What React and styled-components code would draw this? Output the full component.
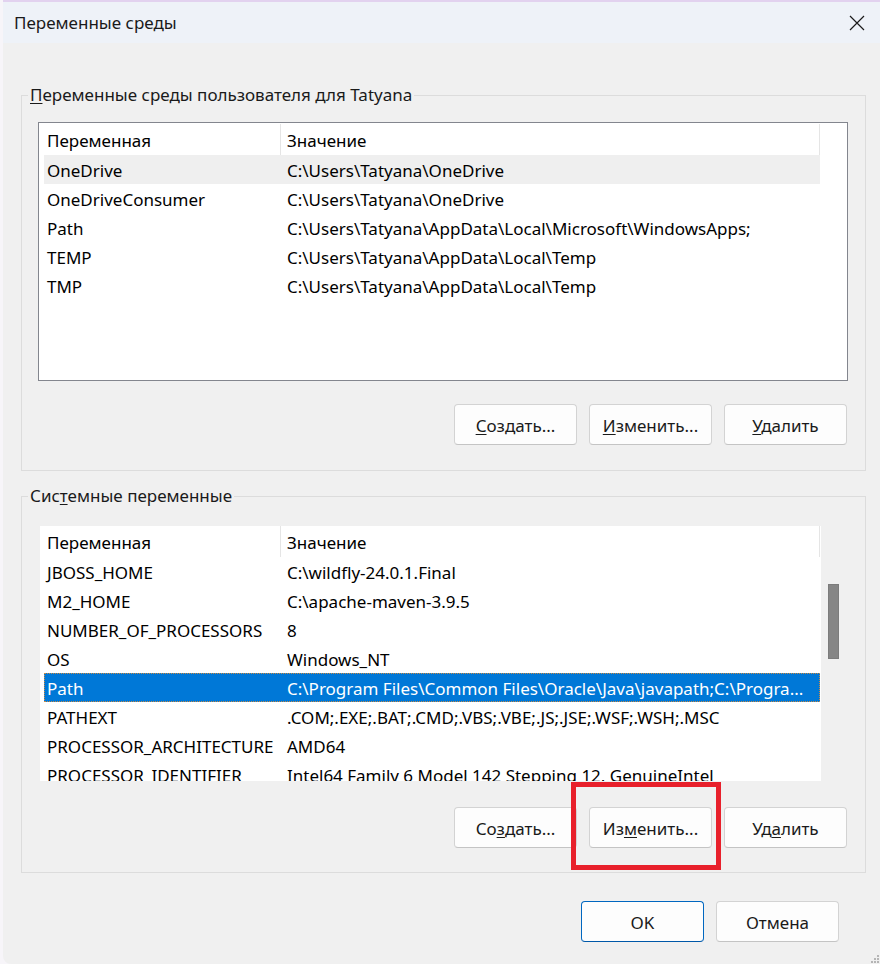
import React from "react";
import styled, { createGlobalStyle } from "styled-components";

const GlobalStyle = createGlobalStyle`
  html, body {
    margin: 0;
    padding: 0;
    background: #f7f5f9;
  }
  body {
    font-family: "Noto Sans", "Open Sans", sans-serif;
    -webkit-font-smoothing: antialiased;
  }
`;

const Screen = styled.div`
  width: 880px;
  height: 964px;
  padding-left: 3px;
  box-sizing: border-box;
  display: flex;
  overflow: hidden;
`;

const Dialog = styled.div`
  position: relative;
  flex: 1;
  display: flex;
  flex-direction: column;
  background: #f0f0f0;
  border-top: 2px solid #e2d2ef;
  border-bottom-left-radius: 8px;
`;

const TitleBar = styled.div`
  height: 41px;
  flex: none;
  display: flex;
  align-items: center;
  justify-content: space-between;
  padding-left: 11px;
  background: #eef2f8;
`;

const Title = styled.span`
  font-size: 17px;
  color: #1a1a1a;
`;

const CloseButton = styled.div`
  width: 46px;
  height: 41px;
  display: flex;
  align-items: center;
  justify-content: center;
`;

const Content = styled.div`
  padding: 0 14px 0 18px;
  display: flex;
  flex-direction: column;
`;

const Group = styled.fieldset`
  margin: ${(p) => p.$top}px 0 0;
  padding: 0;
  min-width: 0;
  border: 1px solid #dcdcdc;
`;

const Legend = styled.legend`
  margin-left: 6px;
  padding: 0 2px;
  font-size: 17px;
  line-height: 20px;
  color: #1a1a1a;
`;

const GroupBody = styled.div`
  padding: ${(p) => p.$pad};
`;

const List = styled.div`
  height: 259px;
  box-sizing: border-box;
  display: flex;
  overflow: hidden;
  background: #fff;
  border: ${(p) => (p.$framed ? "1px solid #83868e" : "2px solid #f0f0f0")};
  padding: ${(p) => (p.$framed ? "1px" : "0")};
`;

const ListBody = styled.div`
  flex: 1;
  min-width: 0;
  overflow: hidden;
`;

const Header = styled.div`
  display: flex;
  height: 31px;
`;

const HeaderCell = styled.div`
  width: ${(p) => p.$w}px;
  flex: none;
  box-sizing: border-box;
  padding: 2px 0 0 ${(p) => p.$pl}px;
  border-right: 1px solid #e5e5e5;
  display: flex;
  align-items: center;
  font-size: 17px;
  color: #000;
`;

const Row = styled.div`
  display: flex;
  width: 776px;
  height: 29px;
  margin-left: 4px;
  padding-top: 2px;
  box-sizing: border-box;
  align-items: center;
  font-size: 17px;
  background: ${(p) =>
    p.$state === "selected" ? "#0078d7" : p.$state === "hover" ? "#efefef" : "transparent"};
  color: ${(p) => (p.$state === "selected" ? "#fff" : "#000")};
  outline: ${(p) => (p.$state === "selected" ? "1px dotted #c98a44" : "none")};
  outline-offset: -1px;
`;

const NameCell = styled.div`
  width: 236px;
  flex: none;
  padding-left: 3px;
  box-sizing: border-box;
  white-space: nowrap;
  overflow: hidden;
`;

const ValueCell = styled.div`
  flex: 1;
  padding-left: 7px;
  white-space: nowrap;
  overflow: hidden;
`;

const ScrollLane = styled.div`
  width: 25px;
  flex: none;
  background: #f0f0f0;
`;

const Thumb = styled.div`
  width: 11px;
  height: 75px;
  margin: 58px 0 0 7px;
  background: #868686;
  box-shadow: inset 0 0 0 1px #7c7c7c;
`;

const ButtonRow = styled.div`
  display: flex;
  justify-content: flex-end;
  gap: 12px;
  margin: ${(p) => p.$top}px 1px 0 0;
`;

const Button = styled.div`
  width: 123px;
  height: 41px;
  box-sizing: border-box;
  padding-top: 2px;
  display: flex;
  align-items: center;
  justify-content: center;
  border: 1px solid ${(p) => (p.$primary ? "#0067c0" : "#d3d3d3")};
  border-bottom-color: ${(p) => (p.$primary ? "#0058a8" : "#c4c4c4")};
  border-radius: 4px;
  background: #fdfdfd;
  font-size: 17px;
  color: #1a1a1a;
`;

const Key = styled.u`
  text-decoration-thickness: 1px;
  text-underline-offset: 2px;
`;

const Highlight = styled.div`
  position: relative;
`;

const RedFrame = styled.div`
  position: absolute;
  left: -18px;
  top: -25px;
  width: 150px;
  height: 88px;
  box-sizing: border-box;
  border: 5px solid #e8202b;
  pointer-events: none;
`;

const Footer = styled.div`
  display: flex;
  justify-content: flex-end;
  gap: 12px;
  margin-top: 28px;
  padding-right: 27px;
`;

const Grip = styled.svg`
  position: absolute;
  right: 1px;
  bottom: 1px;
`;

const userVars = [
  ["OneDrive", "C:\\Users\\Tatyana\\OneDrive"],
  ["OneDriveConsumer", "C:\\Users\\Tatyana\\OneDrive"],
  ["Path", "C:\\Users\\Tatyana\\AppData\\Local\\Microsoft\\WindowsApps;"],
  ["TEMP", "C:\\Users\\Tatyana\\AppData\\Local\\Temp"],
  ["TMP", "C:\\Users\\Tatyana\\AppData\\Local\\Temp"],
];

const systemVars = [
  ["JBOSS_HOME", "C:\\wildfly-24.0.1.Final"],
  ["M2_HOME", "C:\\apache-maven-3.9.5"],
  ["NUMBER_OF_PROCESSORS", "8"],
  ["OS", "Windows_NT"],
  ["Path", "C:\\Program Files\\Common Files\\Oracle\\Java\\javapath;C:\\Progra..."],
  ["PATHEXT", ".COM;.EXE;.BAT;.CMD;.VBS;.VBE;.JS;.JSE;.WSF;.WSH;.MSC"],
  ["PROCESSOR_ARCHITECTURE", "AMD64"],
  ["PROCESSOR_IDENTIFIER", "Intel64 Family 6 Model 142 Stepping 12, GenuineIntel"],
];

const VarTable = ({ rows, pick }) => (
  <ListBody>
    <Header>
      <HeaderCell $w={241} $pl={7}>Переменная</HeaderCell>
      <HeaderCell $w={539} $pl={6}>Значение</HeaderCell>
    </Header>
    {rows.map(([name, value], i) => (
      <Row key={name + i} $state={pick[i]}>
        <NameCell>{name}</NameCell>
        <ValueCell>{value}</ValueCell>
      </Row>
    ))}
  </ListBody>
);

// label split around the mnemonic letter
const Label = ({ pre = "", k, post = "" }) => (
  <span>
    {pre}
    <Key>{k}</Key>
    {post}
  </span>
);

export default function App() {
  return (
    <Screen>
      <GlobalStyle />
      <Dialog>
        <TitleBar>
          <Title>Переменные среды</Title>
          <CloseButton>
            <svg width="16" height="16" viewBox="0 0 16 16">
              <path d="M1 1 L15 15 M15 1 L1 15" stroke="#1b1b1b" strokeWidth="1.2" />
            </svg>
          </CloseButton>
        </TitleBar>

        <Content>
          <Group $top={42}>
            <Legend>
              <Label k="П" post="еременные среды пользователя для Tatyana" />
            </Legend>
            <GroupBody $pad="17px 17px 25px 16px">
              <List $framed>
                <VarTable rows={userVars} pick={{ 0: "hover" }} />
              </List>
              <ButtonRow $top={23}>
                <Button><Label k="С" post="оздать..." /></Button>
                <Button><Label k="И" post="зменить..." /></Button>
                <Button><Label k="У" post="далить" /></Button>
              </ButtonRow>
            </GroupBody>
          </Group>

          <Group $top={15}>
            <Legend>
              <Label pre="Сис" k="т" post="емные переменные" />
            </Legend>
            <GroupBody $pad="18px 17px 24px 16px">
              <List>
                <VarTable rows={systemVars} pick={{ 4: "selected" }} />
                <ScrollLane>
                  <Thumb />
                </ScrollLane>
              </List>
              <ButtonRow $top={24}>
                <Button><Label pre="Со" k="з" post="дать..." /></Button>
                <Highlight>
                  <Button><Label pre="Из" k="м" post="енить..." /></Button>
                  <RedFrame />
                </Highlight>
                <Button><Label pre="Уд" k="а" post="лить" /></Button>
              </ButtonRow>
            </GroupBody>
          </Group>

          <Footer>
            <Button $primary>OK</Button>
            <Button>Отмена</Button>
          </Footer>
        </Content>

        <Grip width="8" height="8" viewBox="0 0 8 8">
          <rect x="6" y="0" width="2" height="2" fill="#b5b5b5" />
          <rect x="3" y="3" width="2" height="2" fill="#b5b5b5" />
          <rect x="6" y="3" width="2" height="2" fill="#b5b5b5" />
          <rect x="0" y="6" width="2" height="2" fill="#b5b5b5" />
          <rect x="3" y="6" width="2" height="2" fill="#b5b5b5" />
          <rect x="6" y="6" width="2" height="2" fill="#b5b5b5" />
        </Grip>
      </Dialog>
    </Screen>
  );
}
